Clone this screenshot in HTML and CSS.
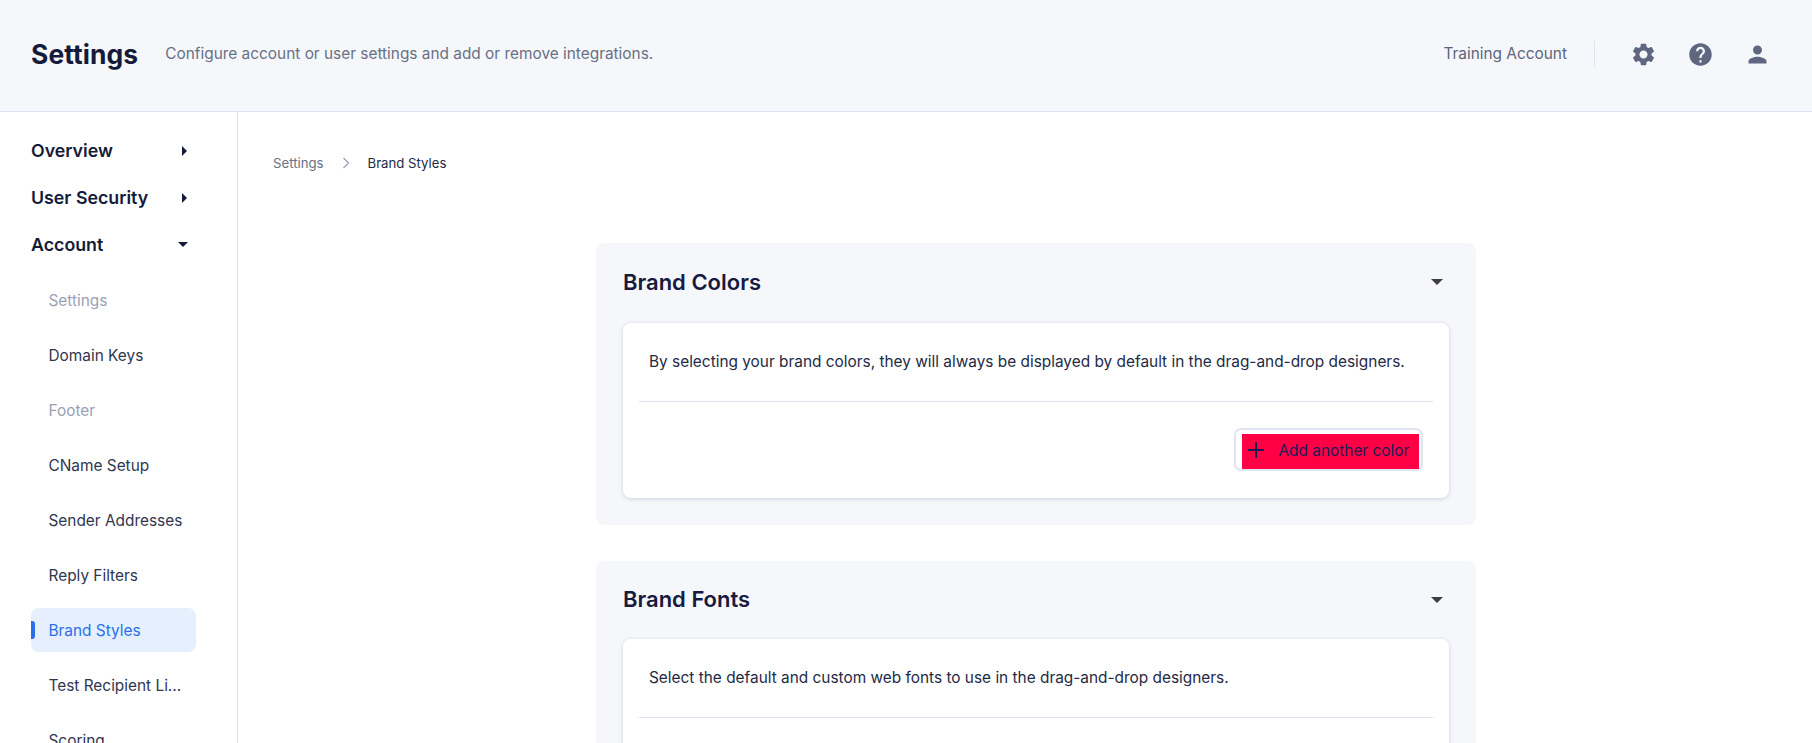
FILE: index.html
```html
<!DOCTYPE html>
<html lang="en">
<head>
<meta charset="utf-8">
<title>Settings</title>
<link rel="stylesheet" href="styles.css">
</head>
<body>
<header class="topbar">
  <h1 class="page-title">Settings</h1>
  <p class="page-desc">Configure account or user settings and add or remove integrations.</p>
  <div class="top-right">
    <span class="account">Training Account</span>
    <span class="vsep"></span>
    <svg class="ti" viewBox="0 0 24 24"><path d="M19.14 12.94c.04-.3.06-.61.06-.94 0-.32-.02-.64-.07-.94l2.03-1.58c.18-.14.23-.41.12-.61l-1.92-3.32c-.12-.22-.37-.29-.59-.22l-2.39.96c-.5-.38-1.03-.7-1.62-.94l-.36-2.54c-.04-.24-.24-.41-.48-.41h-3.84c-.24 0-.43.17-.47.41l-.36 2.54c-.59.24-1.13.57-1.62.94l-2.39-.96c-.22-.08-.47 0-.59.22L2.74 8.87c-.12.21-.08.47.12.61l2.03 1.58c-.05.3-.09.63-.09.94s.02.64.07.94l-2.03 1.58c-.18.14-.23.41-.12.61l1.92 3.32c.12.22.37.29.59.22l2.39-.96c.5.38 1.03.7 1.62.94l.36 2.54c.05.24.24.41.48.41h3.84c.24 0 .44-.17.47-.41l.36-2.54c.59-.24 1.13-.56 1.62-.94l2.39.96c.22.08.47 0 .59-.22l1.92-3.32c.12-.22.07-.47-.12-.61l-2.01-1.58zM12 15.6c-1.98 0-3.6-1.62-3.6-3.6s1.62-3.6 3.6-3.6 3.6 1.62 3.6 3.6-1.62 3.6-3.6 3.6z"/></svg>
    <svg class="ti" viewBox="0 0 24 24"><path d="M12 2C6.48 2 2 6.48 2 12s4.48 10 10 10 10-4.48 10-10S17.52 2 12 2zm1 17h-2v-2h2v2zm2.07-7.75l-.9.92C13.45 12.9 13 13.5 13 15h-2v-.5c0-1.1.45-2.1 1.17-2.83l1.24-1.26c.37-.36.59-.86.59-1.41 0-1.1-.9-2-2-2s-2 .9-2 2H8c0-2.21 1.79-4 4-4s4 1.79 4 4c0 .88-.36 1.68-.93 2.25z"/></svg>
    <svg class="ti" viewBox="0 0 24 24"><path d="M12 12c2.21 0 4-1.79 4-4s-1.79-4-4-4-4 1.79-4 4 1.79 4 4 4zm0 2c-2.67 0-8 1.34-8 4v2h16v-2c0-2.66-5.33-4-8-4z"/></svg>
  </div>
</header>
<div class="shell">
  <nav class="sidebar">
    <div class="nav-head"><span>Overview</span><i class="caret-r"></i></div>
    <div class="nav-head"><span>User Security</span><i class="caret-r"></i></div>
    <div class="nav-head"><span>Account</span><i class="caret-d"></i></div>
    <ul class="nav-list">
      <li class="muted">Settings</li>
      <li>Domain Keys</li>
      <li class="muted">Footer</li>
      <li>CName Setup</li>
      <li>Sender Addresses</li>
      <li>Reply Filters</li>
      <li class="active">Brand Styles</li>
      <li>Test Recipient Li...</li>
      <li>Scoring</li>
    </ul>
  </nav>
  <main class="content">
    <div class="crumbs">
      <span class="crumb-a">Settings</span>
      <svg class="crumb-sep" viewBox="0 0 8 12"><path d="M1.5 1l5 5-5 5" fill="none" stroke="#9aa1b4" stroke-width="1.2"/></svg>
      <span class="crumb-b">Brand Styles</span>
    </div>
    <section class="panel">
      <div class="panel-head"><h2>Brand Colors</h2><i class="caret-d"></i></div>
      <div class="card">
        <p class="card-text">By selecting your brand colors, they will always be displayed by default in the drag-and-drop designers.</p>
        <div class="divider"></div>
        <div class="card-actions">
          <button class="add-btn"><span class="add-inner"><svg class="plus" viewBox="0 0 16 16"><path d="M8 0v16M0 8h16" stroke="#1d1b54" stroke-width="2"/></svg>Add another color</span></button>
        </div>
      </div>
    </section>
    <section class="panel">
      <div class="panel-head compact"><h2>Brand Fonts</h2><i class="caret-d"></i></div>
      <div class="card">
        <p class="card-text">Select the default and custom web fonts to use in the drag-and-drop designers.</p>
        <div class="divider"></div>
        <div class="card-actions"></div>
      </div>
    </section>
  </main>
</div>
</body>
</html>
```
FILE: styles.css
```css
* { box-sizing: border-box; }
html, body { margin: 0; height: 743px; overflow: hidden; background: #fff; }
body { font-family: Inter, "Liberation Sans", sans-serif; color: #232a45; }

.topbar {
  height: 112px;
  background: #f6f7fb;
  border-bottom: 1px solid #dfe2ee;
  display: flex;
  align-items: center;
  padding: 0 0 4px 31px;
}
.page-title { margin: 2px 0 0; font: 700 26.4px/1 Inter, sans-serif; color: #141b38; letter-spacing: .1px; }
.page-desc { margin: 0 0 0 27px; font-size: 15.4px; color: #687085; }
.top-right { margin-left: auto; display: flex; align-items: center; padding-right: 41px; }
.account { font-size: 15.4px; color: #5d6579; }
.vsep { width: 1px; height: 26px; background: #dfe2ee; margin: 0 35px 0 27px; }
.ti { width: 27px; height: 27px; fill: #5f6780; margin-top: 2px; }
.ti + .ti { margin-left: 30px; }

.shell { display: flex; height: 631px; }
.sidebar { width: 238px; flex: none; border-right: 1px solid #dfe2ee; padding: 15px 0 0 31px; }
.nav-head {
  height: 47px;
  width: 165px;
  display: flex;
  align-items: center;
  justify-content: space-between;
  font: 600 17.8px/1 Inter, sans-serif;
  color: #141b38;
}
.caret-r { width: 0; height: 0; border-style: solid; border-width: 5.5px 0 5.5px 5.5px; border-color: transparent transparent transparent #141b38; margin-right: 9.5px; }
.caret-d { width: 0; height: 0; border-style: solid; border-width: 5px 5px 0; border-color: #141b38 transparent transparent; margin-right: 8px; }
.nav-list { list-style: none; margin: 10px 0 0; padding: 0; width: 165px; }
.nav-list li {
  height: 44px;
  margin-bottom: 11px;
  display: flex;
  align-items: center;
  padding-left: 17.5px;
  font-size: 15.4px;
  color: #2f3650;
  border-radius: 8px;
  white-space: nowrap;
}
.nav-list li.muted { color: #9aa1b4; }
.nav-list li.active { background: #e5effd; color: #2a6fe8; position: relative; margin-top: 2px; margin-bottom: 11px; }
.nav-list li.active::before {
  content: "";
  position: absolute;
  left: 0; top: 13px;
  width: 4px; height: 18px;
  background: #2a6fe8;
  border-radius: 0 3px 3px 0;
}

.content { flex: 1; padding: 42px 0 0 35px; overflow: hidden; }
.crumbs { display: flex; align-items: center; height: 18px; font-size: 13.2px; margin-bottom: 71px; }
.crumb-a { color: #687085; }
.crumb-sep { width: 8px; height: 12px; margin: 0 18px; }
.crumb-b { color: #232a45; }
.panel {
  width: 880px;
  margin-left: 323px;
  margin-bottom: 36px;
  background: #f6f7fb;
  border-radius: 8px;
  padding: 0 27px 27px;
}
.panel-head { height: 80px; display: flex; align-items: center; justify-content: space-between; padding-bottom: 2px; }
.panel-head.compact { height: 78px; padding-bottom: 1px; }
.panel-head h2 { margin: 0; font: 600 22px/1 Inter, sans-serif; color: #171b40; }
.panel-head.compact h2 { margin-bottom: 1px; }
.panel-head .caret-d { margin-right: 6px; border-width: 6px 6px 0; border-color: #3d3d3d transparent transparent; }
.card { background: #fff; border-radius: 8px; box-shadow: 0 1px 4px rgba(40, 50, 90, .2); padding: 0 16px; height: 175px; }
.card-text { margin: 0; height: 78px; display: flex; align-items: center; padding: 0 0 1px 10px; font-size: 15.4px; color: #232a45; }
.divider { height: 1px; background: #dfe2ee; }
.card-actions { display: flex; justify-content: flex-end; padding: 26px 10px 0 0; }
.add-btn {
  width: 189px; height: 43px;
  padding: 4px 2px 0 6px;
  background: #fff;
  border: 2px solid #e0e3f0;
  border-radius: 7px;
  font: inherit;
  display: block;
}
.add-inner {
  display: flex; align-items: center;
  height: 35px;
  background: #ff0044;
  padding: 0 0 3px 6px;
  font-size: 15.4px;
  color: #1d1b54;
}
.plus { width: 16px; height: 16px; margin-right: 14.5px; }
```
